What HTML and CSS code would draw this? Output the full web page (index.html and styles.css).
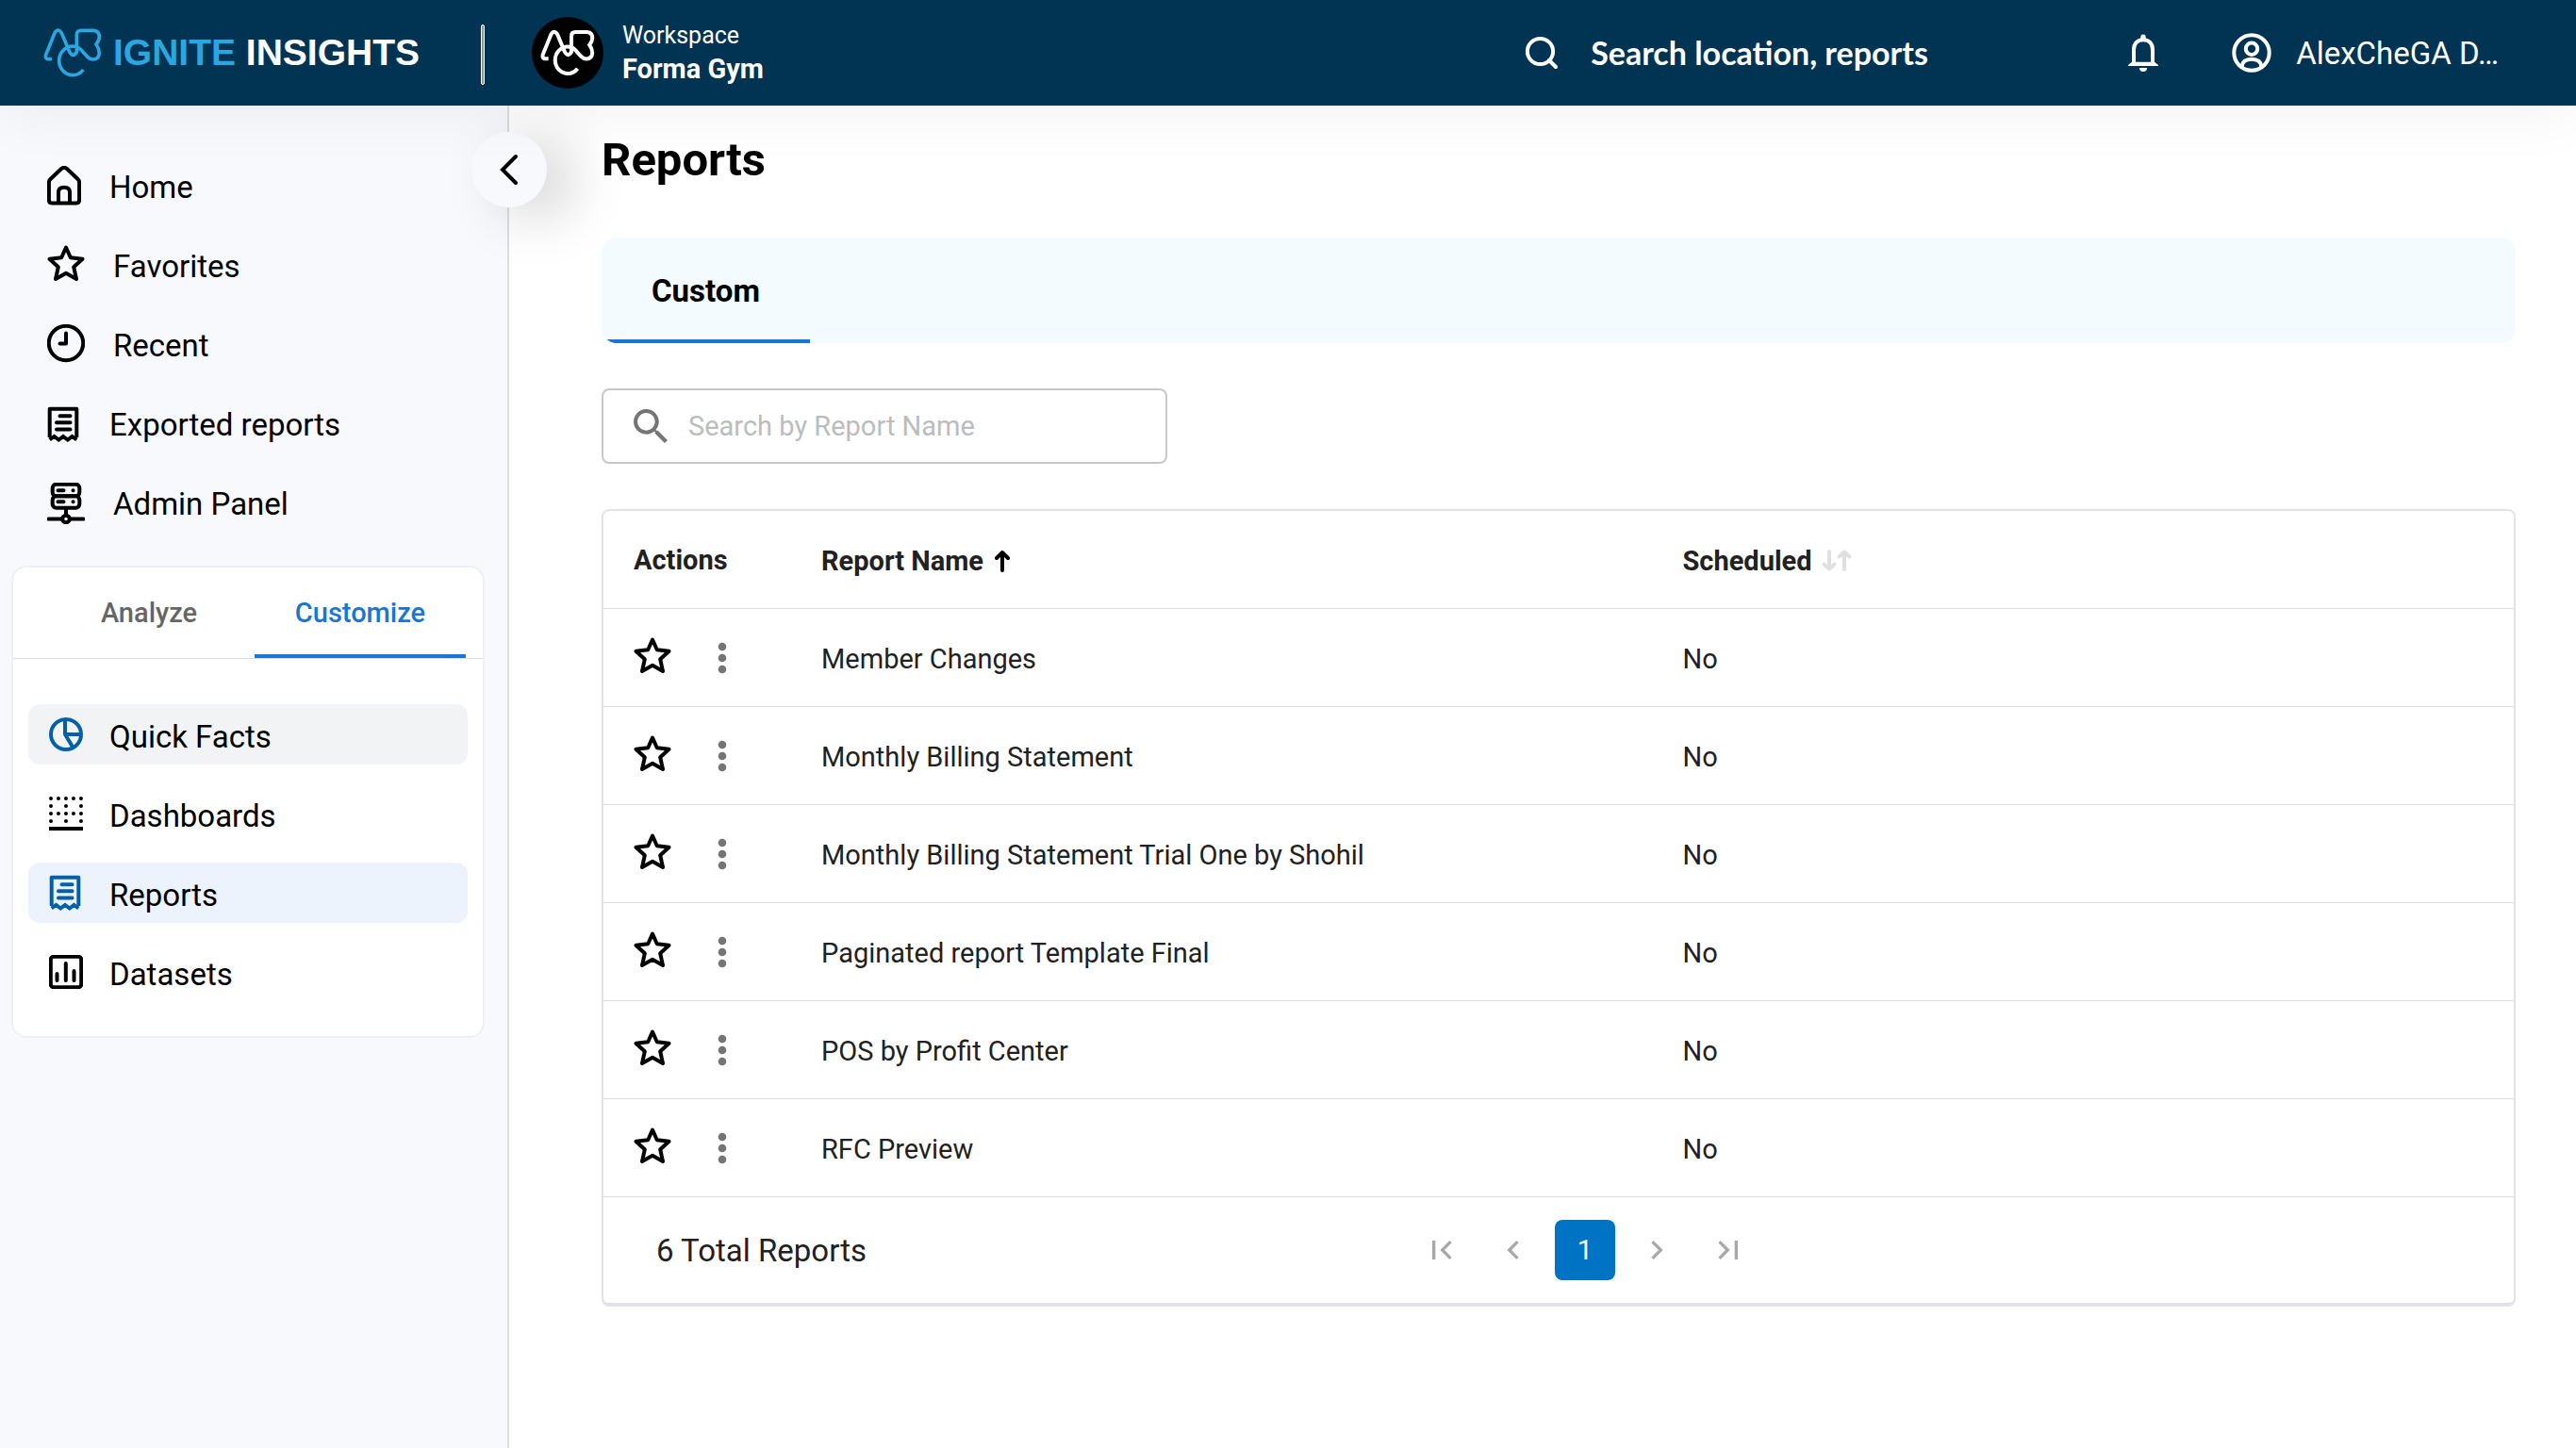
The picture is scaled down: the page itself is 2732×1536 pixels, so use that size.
FILE: index.html
```html
<!DOCTYPE html>
<html lang="en">
<head>
<meta charset="utf-8">
<title>Reports - Ignite Insights</title>
<link rel="stylesheet" href="styles.css">
</head>
<body>
<svg class="sprite" aria-hidden="true">
  <symbol id="abc" viewBox="48 58 186 162"><path d="M75 159H68Q52 161 56 145L84 76Q94 58 106 76L131 136Q143 156 154 136V82Q154 68 168 68H208Q226 70 226 88Q226 100 216 112Q226 126 226 140Q224 160 206 160Q196 160 188 152L166 128Q156 118 142 118C118 118 98 138 98 164C98 190 118 210 142 210Q162 210 175 193"/></symbol>
  <symbol id="star" viewBox="0 0 40 44"><path d="M20 2.500L24.800 13.300L37.500 14.800L28.200 23.300L31 36L20 29.800L9 36L11.800 23.300L2.500 14.800L15.200 13.300Z"/></symbol>
  <symbol id="receipt" viewBox="0 0 36 40"><path d="M2.700 34V3.700H31.300V34"/><path d="M2.700 36.500L7.500 33L12.300 36.500L17 33L21.800 36.500L26.500 33L31.300 36.500" stroke-linejoin="miter"/><path d="M13.500 11.300H24.500M10 18.300H24.500M10 25.500H24.500" stroke-linecap="round"/></symbol>
  <symbol id="dots" viewBox="0 0 24 40"><circle cx="12" cy="8" r="4.300"/><circle cx="12" cy="20" r="4.300"/><circle cx="12" cy="32" r="4.300"/></symbol>
</svg>

<header class="topbar">
  <a class="brand" href="#">
    <svg class="brand-mark" aria-hidden="true"><use href="#abc"/></svg>
    <span class="brand-name"><span class="brand-accent">IGNITE</span> INSIGHTS</span>
  </a>
  <span class="divider"></span>
  <div class="workspace">
    <span class="workspace-logo"><svg aria-hidden="true"><use href="#abc"/></svg></span>
    <div class="workspace-text">
      <span class="workspace-label">Workspace</span>
      <strong class="workspace-name">Forma Gym</strong>
    </div>
  </div>
  <label class="global-search">
    <svg viewBox="0 0 36 36" aria-label="Search"><circle cx="16.500" cy="16.500" r="13.600"/><path d="M26 26L33 33"/></svg>
    <input class="global-input" type="search" placeholder="Search location, reports">
  </label>
  <button class="icon-button bell" type="button" aria-label="Notifications">
    <svg viewBox="0 0 36 40"><path class="line" d="M8 32V17C8 10 12 6.200 18 6.200S28 10 28 17V32"/><path d="M15.300 6V3.200a2.700 2.700 0 0 1 5.400 0V6zM2 34V33L6 29.700H30L34 33V34ZM14 36H22a4 4 0 0 1-8 0Z"/></svg>
  </button>
  <button class="account" type="button">
    <svg viewBox="0 0 42 42" aria-hidden="true"><circle cx="21" cy="21" r="18.700"/><circle cx="21" cy="16.700" r="6.200"/><path d="M10.500 36C11 30.500 15 27.800 21 27.800S31 30.500 31.500 36"/></svg>
    <span>AlexCheGA D…</span>
  </button>
</header>

<div class="shell">
  <aside class="sidebar">
    <button class="collapse" type="button" aria-label="Collapse menu"><svg viewBox="0 0 20 36"><path d="M17 4L3 18L17 32"/></svg></button>
    <nav class="main-nav">
      <a class="nav-link" href="#"><svg class="ico narrow" viewBox="0 0 36 44"><path d="M1.900 36V17.500Q1.900 15.500 3.500 14L15.300 2.800Q18 0.800 20.700 2.800L32.500 14Q34.100 15.500 34.100 17.500V36Q34.100 39.500 30.600 39.500H5.400Q1.900 39.500 1.900 36ZM12 39V28Q12 22.700 18 22.700T24 28V39"/></svg>Home</a>
      <a class="nav-link" href="#"><svg class="ico"><use href="#star"/></svg>Favorites</a>
      <a class="nav-link" href="#"><svg class="ico" viewBox="0 0 40 44"><circle cx="20" cy="20" r="18.200"/><path d="M20 9.500V20.500H13.500" stroke-linecap="round"/></svg>Recent</a>
      <a class="nav-link" href="#"><svg class="ico receipt"><use href="#receipt"/></svg>Exported reports</a>
      <a class="nav-link" href="#"><svg class="ico" viewBox="0 0 40 44"><rect x="5.700" y="1.700" width="28.600" height="12.500" rx="4"/><rect x="5.700" y="14.200" width="28.600" height="12.500" rx="4"/><path d="M11.500 8.200H17.500M11.500 20.300H17.500M27.500 8.200H27.600M27.500 20.300H27.600M20 27V34.500M1.500 38.500H15.500M24.500 38.500H38.500" stroke-linecap="round"/><circle cx="20" cy="38.500" r="3.800"/></svg>Admin Panel</a>
    </nav>
    <section class="card">
      <div class="side-tabs" role="tablist">
        <button class="side-tab" type="button" role="tab">Analyze</button>
        <button class="side-tab active" type="button" role="tab" aria-selected="true">Customize</button>
      </div>
      <nav class="card-menu">
        <a class="menu-link hovered" href="#"><svg class="ico small blue" viewBox="0 0 36 36"><circle cx="18" cy="18" r="16"/><path d="M17 2V18H34M17 18L25.500 32"/></svg><span>Quick Facts</span></a>
        <a class="menu-link" href="#"><svg class="ico small" viewBox="0 0 36 36"><path d="M2 2H34M2 18H34" stroke-dasharray="0 7.990" stroke-linecap="round"/><path d="M2 10H35M2 26H35" stroke-dasharray="0 15.980" stroke-linecap="round"/><path d="M0 34H36" stroke-width="4"/></svg><span>Dashboards</span></a>
        <a class="menu-link current" href="#" aria-current="page"><svg class="ico small receipt blue"><use href="#receipt"/></svg><span>Reports</span></a>
        <a class="menu-link" href="#"><svg class="ico small" viewBox="0 0 36 36"><rect x="1.800" y="1.800" width="32.400" height="32.400" rx="3"/><path d="M8.500 20V27M17.800 9V27M26.500 17V27" stroke-linecap="round"/></svg><span>Datasets</span></a>
      </nav>
    </section>
  </aside>

  <main class="content">
    <h1 class="title">Reports</h1>
    <div class="tabs" role="tablist"><button class="tab" type="button" role="tab" aria-selected="true">Custom</button></div>
    <label class="search">
      <svg viewBox="3 3 17.500 17.500" aria-label="Search"><path d="M15.500 14h-.79l-.28-.27C15.410 12.590 16 11.110 16 9.500 16 5.910 13.090 3 9.500 3S3 5.910 3 9.500 5.910 16 9.500 16c1.610 0 3.090-.59 4.230-1.570l.27.28v.79l5 4.990L20.490 19l-4.990-5zm-6 0C7.010 14 5 11.990 5 9.500S7.010 5 9.500 5 14 7.010 14 9.500 11.990 14 9.500 14z"/></svg>
      <input class="search-input" type="text" placeholder="Search by Report Name">
    </label>

    <div class="panel">
      <table class="reports">
        <colgroup><col class="col-actions"><col><col></colgroup>
        <thead>
          <tr>
            <th scope="col">Actions</th>
            <th scope="col"><span class="sort-head">Report Name <svg class="sort-up" viewBox="0 0 16 24"><path d="M8 22V3M2 9L8 3L14 9"/></svg></span></th>
            <th scope="col"><span class="sort-head">Scheduled <svg class="sort-both" viewBox="0 0 40 24"><path d="M12 2V20M6.500 15.500L12 20.500L17.500 15.500M28 21V3M22.500 7.500L28 2.500L33.500 7.500"/></svg></span></th>
          </tr>
        </thead>
        <tbody>
          <tr><td><div class="actions"><button class="icon-button" type="button" aria-label="Favorite"><svg class="ico"><use href="#star"/></svg></button><button class="icon-button more" type="button" aria-label="More"><svg><use href="#dots"/></svg></button></div></td><td>Member Changes</td><td>No</td></tr>
          <tr><td><div class="actions"><button class="icon-button" type="button" aria-label="Favorite"><svg class="ico"><use href="#star"/></svg></button><button class="icon-button more" type="button" aria-label="More"><svg><use href="#dots"/></svg></button></div></td><td>Monthly Billing Statement</td><td>No</td></tr>
          <tr><td><div class="actions"><button class="icon-button" type="button" aria-label="Favorite"><svg class="ico"><use href="#star"/></svg></button><button class="icon-button more" type="button" aria-label="More"><svg><use href="#dots"/></svg></button></div></td><td>Monthly Billing Statement Trial One by Shohil</td><td>No</td></tr>
          <tr><td><div class="actions"><button class="icon-button" type="button" aria-label="Favorite"><svg class="ico"><use href="#star"/></svg></button><button class="icon-button more" type="button" aria-label="More"><svg><use href="#dots"/></svg></button></div></td><td>Paginated report Template Final</td><td>No</td></tr>
          <tr><td><div class="actions"><button class="icon-button" type="button" aria-label="Favorite"><svg class="ico"><use href="#star"/></svg></button><button class="icon-button more" type="button" aria-label="More"><svg><use href="#dots"/></svg></button></div></td><td>POS by Profit Center</td><td>No</td></tr>
          <tr><td><div class="actions"><button class="icon-button" type="button" aria-label="Favorite"><svg class="ico"><use href="#star"/></svg></button><button class="icon-button more" type="button" aria-label="More"><svg><use href="#dots"/></svg></button></div></td><td>RFC Preview</td><td>No</td></tr>
        </tbody>
      </table>
      <div class="table-footer">
        <span class="total">6 Total Reports</span>
        <nav class="pager" aria-label="Pages">
          <button class="page" type="button" aria-label="First page"><svg viewBox="0 0 24 24"><path d="M18.410 16.590L13.820 12l4.590-4.590L17 6l-6 6 6 6zM6 6h2v12H6z"/></svg></button>
          <button class="page" type="button" aria-label="Previous page"><svg viewBox="0 0 24 24"><path d="M15.410 7.410L14 6l-6 6 6 6 1.410-1.410L10.830 12z"/></svg></button>
          <button class="page selected" type="button" aria-current="page">1</button>
          <button class="page" type="button" aria-label="Next page"><svg viewBox="0 0 24 24"><path d="M10 6L8.590 7.410 13.170 12l-4.580 4.590L10 18l6-6z"/></svg></button>
          <button class="page" type="button" aria-label="Last page"><svg viewBox="0 0 24 24"><path d="M5.590 7.410L10.180 12l-4.590 4.590L7 18l6-6-6-6zM16 6h2v12h-2z"/></svg></button>
        </nav>
      </div>
    </div>
  </main>
</div>
</body>
</html>
```
FILE: styles.css
```css
*, *::before, *::after { box-sizing: border-box; }

body {
  margin: 0;
  min-height: 100vh;
  display: flex;
  flex-direction: column;
  background: #fff;
  color: #000;
  font-family: Roboto, "Liberation Sans", sans-serif;
  font-size: 29px;
}

button, input { font: inherit; color: inherit; border: 0; padding: 0; background: none; }
input { outline: 0; min-width: 0; }
a { color: inherit; text-decoration: none; }
svg { display: block; flex: none; }
.sprite { position: absolute; width: 0; height: 0; }

/* Top bar */
.topbar {
  position: relative;
  z-index: 1;
  display: flex;
  align-items: center;
  height: 112px;
  padding: 0 82px 0 46px;
  background: #013353;
  color: #fff;
  box-shadow: 0 12px 60px rgba(0, 0, 0, 0.05);
}
.brand { display: flex; align-items: center; gap: 12px; flex: 0 0 464px; }
.brand-mark { width: 62px; height: 54px; fill: none; stroke: #2ba6e1; stroke-width: 11; }
.brand-name { font: 700 39px/48px "Liberation Sans", Arial, sans-serif; white-space: nowrap; }
.brand-accent { color: #2ba6e1; }
.divider { width: 4px; height: 64px; border: 1px solid #fff; border-radius: 2px; background: #8499ab; margin-top: 4px; }
.workspace { display: flex; align-items: center; gap: 20px; margin-left: 50px; }
.workspace-logo { display: grid; place-items: center; width: 76px; height: 76px; border-radius: 50%; background: #000; }
.workspace-logo svg { width: 58px; height: 50px; fill: none; stroke: #fff; stroke-width: 13; }
.workspace-text { display: flex; flex-direction: column; }
.workspace-label { font-size: 25px; line-height: 34px; }
.workspace-name { line-height: 36px; }
.global-search { display: flex; align-items: center; gap: 34px; margin-left: auto; }
.global-search svg { width: 36px; height: 36px; fill: none; stroke: #fff; stroke-width: 4; stroke-linecap: round; }
.global-input { width: 518px; font: 700 34px/40px Lato, "Noto Sans", sans-serif; }
.global-input::placeholder { color: #fff; opacity: 1; }
.icon-button { display: block; cursor: pointer; }
.bell { margin-left: 50px; }
.bell svg { width: 36px; height: 40px; fill: #fff; }
.bell .line { fill: none; stroke: #fff; stroke-width: 4; }
.account { display: flex; align-items: center; gap: 26px; margin-left: 76px; font-size: 33px; }
.account svg { width: 42px; height: 42px; fill: none; stroke: #fff; stroke-width: 4; }

/* Sidebar */
.shell { display: flex; flex: 1; }
.sidebar {
  position: relative;
  flex: 0 0 540px;
  padding: 54px 24px 0 12px;
  border-right: 2px solid #dcdde3;
  background: #f8f9fd;
}
.collapse {
  position: absolute;
  top: 28px;
  right: -42px;
  display: grid;
  place-items: center;
  width: 80px;
  height: 80px;
  border-radius: 50%;
  background: #f8f9fd;
  box-shadow: 28px 10px 60px rgba(0, 0, 0, 0.18);
}
.collapse svg { width: 20px; height: 36px; fill: none; stroke: #000; stroke-width: 4; stroke-linecap: round; }
.ico { width: 40px; height: 44px; fill: none; stroke: #000; stroke-width: 4; stroke-linejoin: round; }
.ico.narrow { width: 36px; }
.ico.small { width: 36px; height: 36px; }
.ico.receipt { width: 36px; height: 40px; }
.ico.blue { stroke: #0060ac; }
.main-nav { display: flex; flex-direction: column; gap: 20px; padding-left: 38px; }
.nav-link { display: flex; align-items: center; gap: 30px; height: 64px; font-size: 33px; }
.card { margin-top: 34px; border: 2px solid #eef0f5; border-radius: 16px; background: #fff; }
.side-tabs { display: flex; padding: 0 18px 0 32px; border-bottom: 1px solid #dedede; }
.side-tab { flex: 1; height: 96px; border-bottom: 4px solid transparent; border-top: 4px solid transparent; font-weight: 500; color: #666; }
.side-tab.active { color: #1976d2; border-bottom-color: #1976d2; }
.card-menu { display: flex; flex-direction: column; gap: 20px; padding: 48px 16px 36px; }
.menu-link { display: flex; align-items: center; gap: 28px; height: 64px; padding-left: 22px; border-radius: 12px; font-size: 33px; }
.menu-link span { padding-top: 4px; }
.menu-link.hovered { background: #f2f3f5; }
.menu-link.current { background: #ecf3fc; }

/* Reports page */
.content { flex: 1; min-width: 0; padding: 30px 64px 0 98px; }
.title { margin: 0; font-size: 49px; line-height: 56px; }
.tabs { display: flex; margin-top: 54px; border-radius: 16px; background: #f3fbff; overflow: hidden; }
.tab { width: 221px; height: 112px; border-top: 4px solid transparent; border-bottom: 4px solid #1976d2; font-size: 33px; font-weight: 700; }
.search {
  display: flex;
  align-items: center;
  gap: 22px;
  width: 600px;
  height: 80px;
  margin: 48px 0;
  padding: 0 32px;
  border: 2px solid #c8c8ca;
  border-radius: 8px;
}
.search svg { width: 36px; height: 36px; fill: #757575; }
.search-input { flex: 1; }
.search-input::placeholder { color: #b9bdbe; opacity: 1; }

.panel { border: 2px solid #e2e2ea; border-radius: 8px; }
.reports { width: 100%; table-layout: fixed; border-collapse: separate; border-spacing: 0; color: #212121; }
.col-actions { width: 199px; }
.reports th, .reports td { height: 104px; padding: 0 32px; border-bottom: 1px solid #dedee0; text-align: left; font-weight: 400; }
.reports th { font-weight: 700; }
.reports tr > :not(:first-child) { padding-top: 2px; }
.sort-head { display: flex; align-items: center; gap: 12px; }
.sort-up, .sort-both { fill: none; stroke: #000; stroke-width: 4; stroke-linecap: round; stroke-linejoin: round; height: 24px; }
.sort-up { width: 16px; }
.sort-both { width: 40px; stroke: #e0e0e0; }
.sort-head .sort-both { margin-left: -6px; }
.actions { display: flex; align-items: center; gap: 42px; }
.more svg { width: 24px; height: 40px; fill: #757575; }

.table-footer {
  display: grid;
  grid-template-columns: 1fr auto 1fr;
  align-items: center;
  padding: 24px 0 24px 56px;
  border-bottom: 2px solid #e0e0e6;
  border-radius: 0 0 6px 6px;
}
.total { font-size: 33px; color: #212121; }
.pager { display: flex; gap: 12px; }
.page { display: grid; place-items: center; width: 64px; height: 64px; border-radius: 8px; }
.page svg { width: 40px; height: 40px; fill: #a8a8a8; }
.page.selected { background: #0073c4; color: #fff; }
```
